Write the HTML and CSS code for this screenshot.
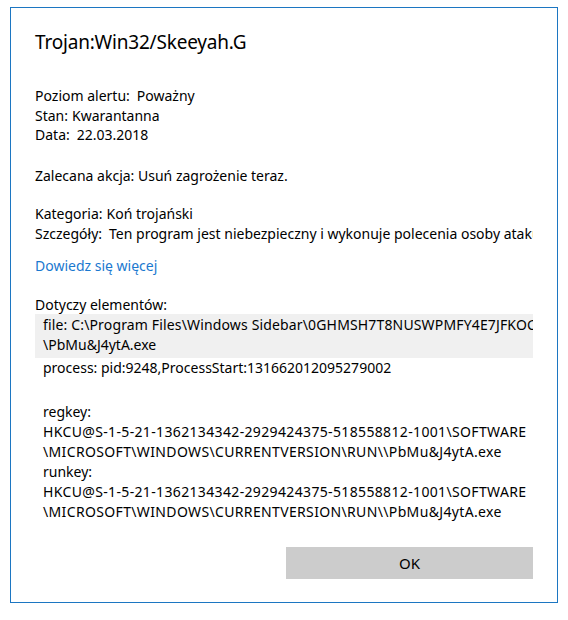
FILE: index.html
```html
<!DOCTYPE html>
<html lang="pl">
<head>
    <meta charset="UTF-8">
    <meta name="viewport" content="width=device-width, initial-scale=1.0">
    <title>Szczegóły zagrożenia</title>
    <link rel="stylesheet" href="styles.css">
</head>
<body>
    <div class="dialog">
        <h1 class="threat-name">Trojan:Win32/Skeeyah.G</h1>

        <div class="summary">
            <div class="row"><span class="label">Poziom alertu:</span><span class="value spaced">Poważny</span></div>
            <div class="row"><span class="label">Stan:</span><span class="value">Kwarantanna</span></div>
            <div class="row"><span class="label">Data:</span><span class="value spaced">22.03.2018</span></div>
        </div>

        <p class="action">Zalecana akcja: Usuń zagrożenie teraz.</p>

        <div class="classification">
            <div class="row"><span class="label">Kategoria:</span><span class="value">Koń trojański</span></div>
            <div class="row clipped"><span class="label">Szczegóły:</span><span class="value spaced">Ten program jest niebezpieczny i wykonuje polecenia osoby atakującej.</span></div>
        </div>

        <a class="learn-more" href="#">Dowiedz się więcej</a>

        <div class="affected">
            <div class="affected-title">Dotyczy elementów:</div>
            <ul class="affected-list">
                <li class="selected">
                    <span class="line file-path">file: C:\Program Files\Windows Sidebar\0GHMSH7T8NUSWPMFY4E7JFKOC6R1</span>
                    <span class="line">\PbMu&amp;J4ytA.exe</span>
                </li>
                <li class="process">
                    <span class="line">process: pid:9248,ProcessStart:131662012095279002</span>
                </li>
                <li>
                    <span class="line">regkey:</span>
                    <span class="line path">HKCU@S-1-5-21-1362134342-2929424375-518558812-1001\SOFTWARE</span>
                    <span class="line path">\MICROSOFT\WINDOWS\CURRENTVERSION\RUN\\PbMu&amp;J4ytA.exe</span>
                </li>
                <li>
                    <span class="line">runkey:</span>
                    <span class="line path">HKCU@S-1-5-21-1362134342-2929424375-518558812-1001\SOFTWARE</span>
                    <span class="line path">\MICROSOFT\WINDOWS\CURRENTVERSION\RUN\\PbMu&amp;J4ytA.exe</span>
                </li>
            </ul>
        </div>

        <div class="dialog-footer">
            <button class="ok-button">OK</button>
        </div>
    </div>
</body>
</html>
```

FILE: styles.css
```css
/* Ogólne */
body {
    margin: 0;
    background-color: #ffffff;
    color: #000000;
    font-family: "Segoe UI", "Noto Sans", sans-serif;
    font-size: 14px;
}

/* Okno dialogowe */
.dialog {
    box-sizing: border-box;
    width: 548px;
    margin: 7px 0 0 10px;
    padding: 20px 24px 23px 24px;
    border: 1px solid #1c76c2;
}

.threat-name {
    margin: 0;
    font-size: 19px;
    font-weight: normal;
    letter-spacing: -0.2px;
    line-height: 28px;
}

/* Bloki tekstu */
.summary,
.classification,
.action {
    line-height: 19.5px;
}

.summary {
    margin-top: 30px;
}

.action {
    margin: 21.5px 0 0;
}

.classification {
    margin-top: 18.5px;
}

.value {
    margin-left: 4px;
}

.value.spaced {
    margin-left: 7px;
}

.clipped {
    white-space: nowrap;
    overflow: hidden;
}

.learn-more {
    display: block;
    margin-top: 13px;
    line-height: 19.5px;
    color: #1a78cf;
    text-decoration: none;
}

/* Lista elementów */
.affected {
    margin-top: 19.5px;
    line-height: 20px;
}

.affected-title {
    line-height: 19px;
}

.affected-list {
    list-style: none;
    margin: 0;
    padding: 0;
}

.affected-list li {
    padding-left: 8px;
    overflow: hidden;
}

.affected-list li.selected {
    padding-top: 1px;
    padding-bottom: 3px;
    background-color: #f0f0f0;
}

.affected-list li.process {
    margin-bottom: 24px;
}

.line {
    display: block;
    white-space: nowrap;
}

/* ścieżki pisane wielkimi literami są w oryginale szersze */
.line.path {
    letter-spacing: 0.35px;
}

.line.file-path {
    letter-spacing: 0.15px;
}

/* Przycisk */
.dialog-footer {
    display: flex;
    justify-content: flex-end;
    margin-top: 25px;
}

.ok-button {
    width: 247px;
    height: 32px;
    border: none;
    background-color: #cccccc;
    color: #000000;
    font-family: inherit;
    font-size: 15px;
    cursor: pointer;
}
```
